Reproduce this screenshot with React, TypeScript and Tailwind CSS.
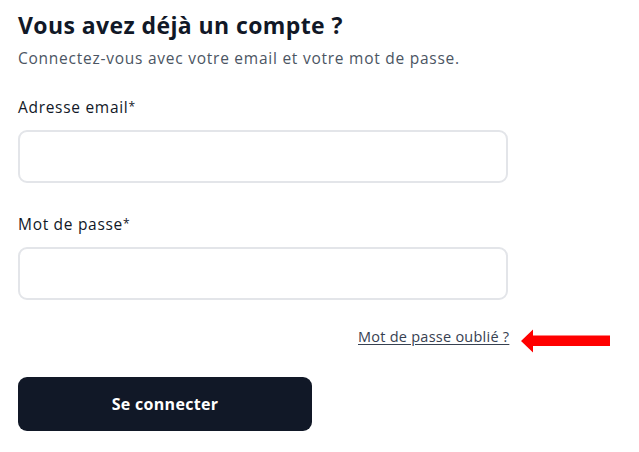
const Field: React.FC<{ label: string; type: string }> = (props) => (
  <label className="block">
    <span className="block text-[15.5px] leading-[20px] font-medium tracking-[0.7px] text-[#111827]">
      {props.label}
      <span className="align-top text-[12px]">*</span>
    </span>
    <input
      type={props.type}
      className="mt-[13px] block h-[53px] w-[490px] rounded-[9px] border-2 border-[#e3e5e9] bg-white px-4 outline-none"
    />
  </label>
);

const RedArrow = () => (
  <svg width="89" height="24" viewBox="0 0 89 24" aria-hidden="true">
    <path d="M0 12 L12 0.5 L12 6.5 L89 6.5 L89 17 L12 17 L12 23.5 Z" fill="#ff0000" />
  </svg>
);

export default function App() {
  return (
    <div
      className="min-h-[452px] w-[639px] bg-white pt-[10px] pl-[18px]"
      style={{ fontFamily: '"Open Sans", "Liberation Sans", sans-serif' }}
    >
      <h1 className="text-[23px] leading-[30px] font-bold tracking-[0.4px] text-[#111827]">
        Vous avez déjà un compte ?
      </h1>
      <p className="mt-[8px] text-[15.5px] leading-[20px] tracking-[0.75px] text-[#4b5563]">
        Connectez-vous avec votre email et votre mot de passe.
      </p>

      <form className="mt-[29px]" onSubmit={(e) => e.preventDefault()}>
        <Field label="Adresse email" type="email" />
        <div className="mt-[31px]">
          <Field label="Mot de passe" type="password" />
        </div>

        <div className="mt-[28px] flex w-[620px] items-start">
          <a
            href="#"
            className="ml-[340px] text-[14.5px] leading-[18px] tracking-[0.25px] text-[#374151] underline underline-offset-2"
          >
            Mot de passe oublié ?
          </a>
          <span className="mt-[1px] ml-[12px] flex">
            <RedArrow />
          </span>
        </div>

        <button
          type="submit"
          className="mt-[24px] flex h-[54px] w-[294px] items-center justify-center rounded-[9px] bg-[#111827] text-[16px] font-bold tracking-[0.3px] text-white"
        >
          Se connecter
        </button>
      </form>
    </div>
  );
}
